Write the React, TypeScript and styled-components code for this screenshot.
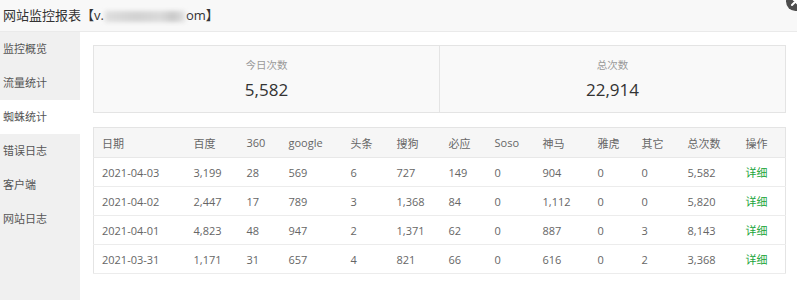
import React from 'react';
import styled, { createGlobalStyle } from 'styled-components';

const GlobalStyle = createGlobalStyle`
  html, body {
    margin: 0;
    padding: 0;
    background: #fff;
  }
  body {
    font-family: "Open Sans", "Noto Sans CJK SC", sans-serif;
    color: #666;
  }
`;

const Layer = styled.div`
  position: relative;
  width: 797px;
  height: 300px;
  overflow: hidden;
  display: flex;
  flex-direction: column;
  background: #fff;
`;

const TitleBar = styled.div`
  height: 31px;
  line-height: 31px;
  padding-left: 3px;
  background: #f8f8f8;
  border-bottom: 1px solid #eaeaea;
  font-size: 13px;
  color: #333;
  flex-shrink: 0;
`;

const BlurBox = styled.span`
  display: inline-block;
  width: 80px;
  height: 11px;
  margin: 0 1px;
  vertical-align: middle;
  background: linear-gradient(90deg, #dedede, #d2d2d2 40%, #dadada 70%, #c9c9c9 85%, #e2e2e2);
  filter: blur(2px);
`;

const CloseBtn = styled.span`
  position: absolute;
  z-index: 2;
  top: -8px;
  right: -8px;
  width: 19px;
  height: 19px;
  border-radius: 50%;
  background: #4d4d4d;
  display: flex;
  align-items: center;
  justify-content: center;
`;

const Body = styled.div`
  flex: 1;
  display: flex;
`;

const Sidebar = styled.ul`
  list-style: none;
  margin: 0;
  padding: 0;
  width: 80px;
  flex-shrink: 0;
  background: #f0f0f0;
`;

const NavItem = styled.li<{ $active?: boolean }>`
  height: 34px;
  line-height: 34px;
  padding-left: 3px;
  font-size: 11px;
  color: #555;
  background: ${p => (p.$active ? '#fff' : 'transparent')};
`;

const Main = styled.div`
  flex: 1;
  padding: 13px 12px 0 13px;
`;

const Summary = styled.div`
  display: flex;
  height: 66px;
  border: 1px solid #e4e4e4;
  background: #f9f9f9;
`;

const SummaryCell = styled.div`
  flex: 1;
  display: flex;
  flex-direction: column;
  align-items: center;
  padding-top: 12px;
  & + & {
    border-left: 1px solid #e4e4e4;
  }
`;

const SummaryLabel = styled.div`
  font-size: 10.5px;
  color: #999;
  line-height: 14px;
`;

const SummaryValue = styled.div`
  margin-top: 7px;
  font-size: 17px;
  color: #333;
  line-height: 22px;
`;

const Table = styled.table`
  margin-top: 14px;
  width: 100%;
  table-layout: fixed;
  border-collapse: collapse;
  border: 1px solid #e4e4e4;
  font-size: 11px;
  color: #666;
`;

const Col = styled.col<{ $w: number }>`
  width: ${p => p.$w}px;
`;

const HeadCell = styled.th`
  height: 29px;
  padding: 0 0 0 8px;
  text-align: left;
  font-weight: normal;
  background: #f6f6f6;
  border-bottom: 1px solid #e8e8e8;
  white-space: nowrap;
`;

const Cell = styled.td`
  height: 28px;
  padding: 0 0 0 8px;
  border-bottom: 1px solid #ececec;
  white-space: nowrap;
`;

const DetailLink = styled.a`
  color: #20a53a;
  text-decoration: none;
`;

const widths = [92, 53, 42, 62, 46, 52, 46, 48, 55, 44, 46, 58, 48];
const heads = ['日期', '百度', '360', 'google', '头条', '搜狗', '必应', 'Soso', '神马', '雅虎', '其它', '总次数', '操作'];

const rows = [
  ['2021-04-03', '3,199', '28', '569', '6', '727', '149', '0', '904', '0', '0', '5,582'],
  ['2021-04-02', '2,447', '17', '789', '3', '1,368', '84', '0', '1,112', '0', '0', '5,820'],
  ['2021-04-01', '4,823', '48', '947', '2', '1,371', '62', '0', '887', '0', '3', '8,143'],
  ['2021-03-31', '1,171', '31', '657', '4', '821', '66', '0', '616', '0', '2', '3,368'],
];

const nav = ['监控概览', '流量统计', '蜘蛛统计', '错误日志', '客户端', '网站日志'];

export default function App() {
  return (
    <>
      <GlobalStyle />
      <Layer>
        <TitleBar>
          网站监控报表【v.<BlurBox />om】
        </TitleBar>
        <CloseBtn>
          <svg width="19" height="19" viewBox="0 0 19 19">
            <path d="M6 6l7 7M13 6l-7 7" stroke="#fff" strokeWidth="2" strokeLinecap="round" />
          </svg>
        </CloseBtn>
        <Body>
          <Sidebar>
            {nav.map(n => (
              <NavItem key={n} $active={n === '蜘蛛统计'}>{n}</NavItem>
            ))}
          </Sidebar>
          <Main>
            <Summary>
              <SummaryCell>
                <SummaryLabel>今日次数</SummaryLabel>
                <SummaryValue>5,582</SummaryValue>
              </SummaryCell>
              <SummaryCell>
                <SummaryLabel>总次数</SummaryLabel>
                <SummaryValue>22,914</SummaryValue>
              </SummaryCell>
            </Summary>
            <Table>
              <colgroup>
                {widths.map((w, i) => <Col key={i} $w={w} />)}
              </colgroup>
              <thead>
                <tr>
                  {heads.map(h => <HeadCell key={h}>{h}</HeadCell>)}
                </tr>
              </thead>
              <tbody>
                {rows.map(r => (
                  <tr key={r[0]}>
                    {r.map((c, i) => <Cell key={i}>{c}</Cell>)}
                    <Cell><DetailLink href="#">详细</DetailLink></Cell>
                  </tr>
                ))}
              </tbody>
            </Table>
          </Main>
        </Body>
      </Layer>
    </>
  );
}
